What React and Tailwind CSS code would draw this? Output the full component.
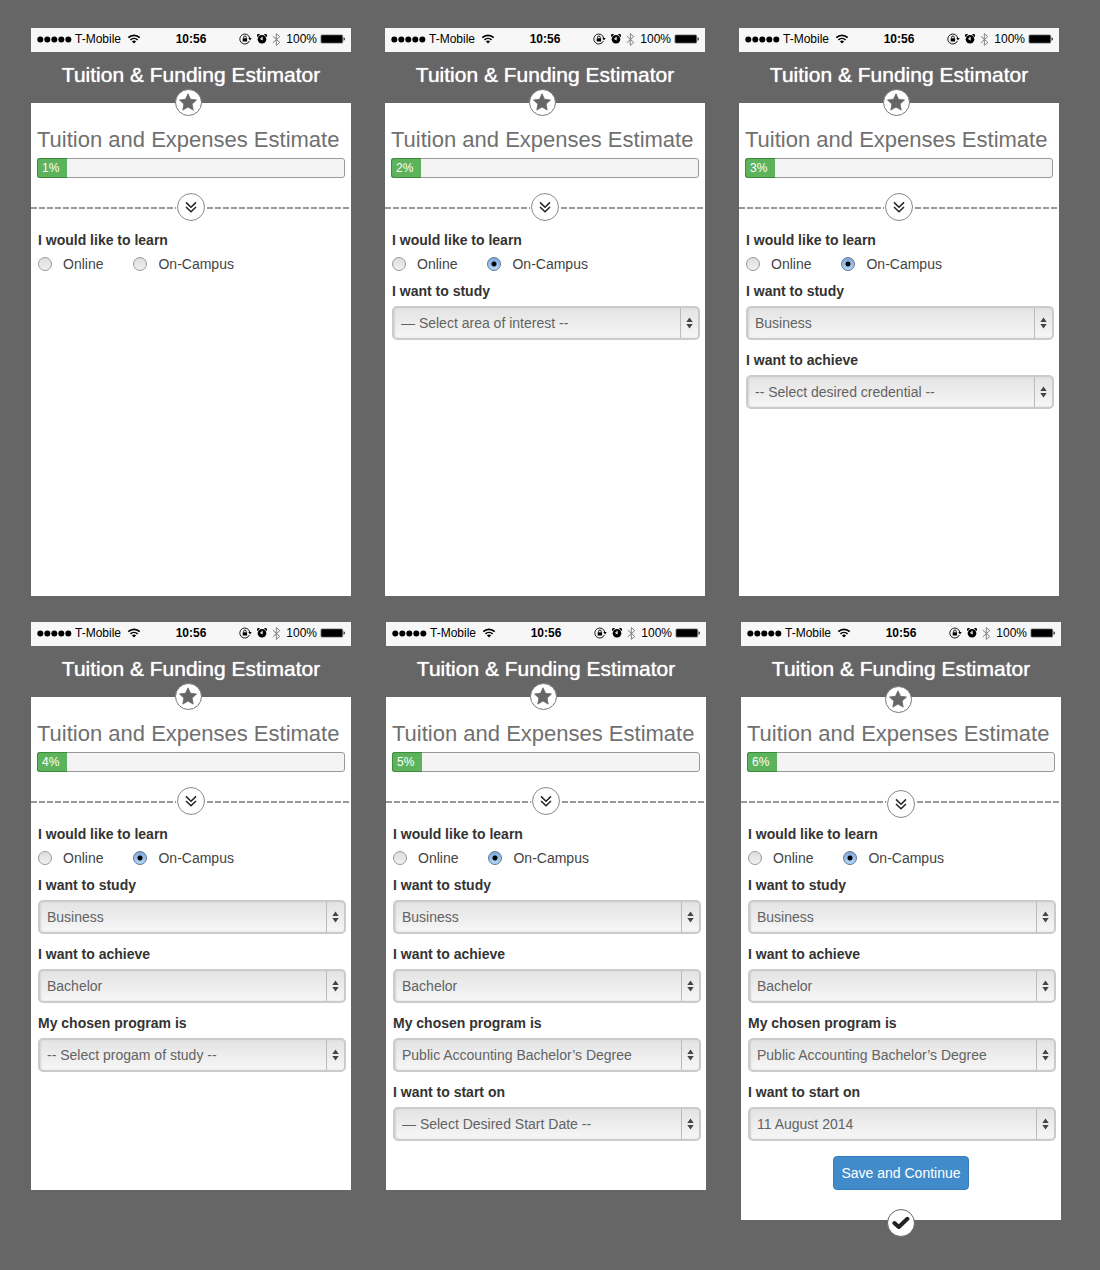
import React, { useId } from "react";

const topScreens = [
  { percent: 1, fields: [] },
  { percent: 2, campus: true, fields: [["I want to study", "— Select area of interest --"]] },
  {
    percent: 3,
    campus: true,
    fields: [
      ["I want to study", "Business"],
      ["I want to achieve", "-- Select desired credential --"],
    ],
  },
];

const bottomScreens = [
  {
    percent: 4,
    campus: true,
    fields: [
      ["I want to study", "Business"],
      ["I want to achieve", "Bachelor"],
      ["My chosen program is", "-- Select progam of study --"],
    ],
  },
  {
    percent: 5,
    campus: true,
    fields: [
      ["I want to study", "Business"],
      ["I want to achieve", "Bachelor"],
      ["My chosen program is", "Public Accounting Bachelor’s Degree"],
      ["I want to start on", "— Select Desired Start Date --"],
    ],
  },
  {
    percent: 6,
    campus: true,
    complete: true,
    fields: [
      ["I want to study", "Business"],
      ["I want to achieve", "Bachelor"],
      ["My chosen program is", "Public Accounting Bachelor’s Degree"],
      ["I want to start on", "11 August 2014"],
    ],
  },
];

function StatusBar() {
  return (
    <div className="grid h-6 grid-cols-[1fr_auto_1fr] items-center bg-[#f7f7f7] px-1.5 pb-0.5 text-[12px] leading-[22px] text-black">
      <div className="flex items-center">
        <svg width="35" height="7" viewBox="0 0 35 7" aria-hidden="true">
          {[3, 10, 17, 24, 31].map((x) => (
            <circle key={x} cx={x + 0.3} cy="3.5" r="3" />
          ))}
        </svg>
        <span className="ml-[3px]">T-Mobile</span>
        <svg className="ml-1.5" width="14" height="10" viewBox="0 0 13 10" fill="none" stroke="#000" aria-hidden="true">
          <path d="M.8 3.6a8.2 8.2 0 0 1 11.4 0" strokeWidth="1.7" />
          <path d="M2.9 5.9a5.2 5.2 0 0 1 7.2 0" strokeWidth="1.5" />
          <path d="M6.5 9.6 4.4 7.5a3 3 0 0 1 4.2 0Z" fill="#000" stroke="none" />
        </svg>
      </div>
      <span className="font-bold">10:56</span>
      <div className="flex items-center justify-end">
        <svg width="13" height="12" viewBox="0 0 13 12" fill="none" stroke="#000" aria-hidden="true">
          <path d="M10.4 8A5 5 0 1 1 10.7 5" strokeWidth=".9" />
          <path d="M9.3 5h3.4L11 7.4Z" fill="#000" stroke="none" />
          <rect x="3.7" y="5.3" width="4.4" height="3.2" fill="#000" stroke="none" />
          <path d="M4.6 5.4V4.3a1.3 1.3 0 0 1 2.6 0v1.1" strokeWidth=".9" />
        </svg>
        <svg className="ml-[5px]" width="10" height="10" viewBox="0 0 10 10" aria-hidden="true">
          <circle cx="5" cy="5.2" r="4.3" />
          <path d="M.2 3A1.7 1.7 0 0 1 3 .6ZM9.8 3A1.7 1.7 0 0 0 7 .6Z" />
          <path d="M5.1 2.8v2.7L3.4 4.5" fill="none" stroke="#fff" strokeWidth="1.1" />
        </svg>
        <svg className="ml-[5px]" width="9" height="13" viewBox="0 0 9 13" fill="none" stroke="#808080" strokeWidth="1" aria-hidden="true">
          <path d="m.8 3.2 7 6.2-3.5 3V.6l3.5 3-7 6.2" />
        </svg>
        <span className="ml-[5px]">100%</span>
        <svg className="ml-[3px]" width="25" height="10" viewBox="0 0 25 10" aria-hidden="true">
          <rect x=".5" y=".5" width="22.6" height="9" rx="1.5" fill="#888" />
          <rect x="1.3" y="1.2" width="21" height="7.6" rx=".8" />
          <path d="M23.6 3.2c1.6.6 1.6 3 0 3.6Z" />
        </svg>
      </div>
    </div>
  );
}

function Star() {
  return (
    <svg width="19" height="19" viewBox="0 0 19 19" fill="#666" stroke="#666" strokeWidth=".8" strokeLinejoin="round" aria-hidden="true">
      <path d="m9 .8 2.5 5.5 6 .7-4.4 4.1 1.1 6L9 14.1l-5.2 3 1.1-6L.5 7l6-.7Z" />
    </svg>
  );
}

function SelectField({ label, value }) {
  const id = useId();
  return (
    <div className="mt-2.5 first:mt-[7px]">
      <label htmlFor={id} className="block text-[14px] leading-5 font-bold text-[#333]">
        {label}
      </label>
      <div className="relative mt-[5px]">
        <select
          id={id}
          defaultValue={value}
          className="block h-[34px] w-full appearance-none rounded-[5px] border-2 border-[#cbcbcb] bg-linear-to-b from-[#e2e2e2] to-[#f8f8f8] bg-origin-border pr-6 pl-[7px] text-[14px] text-[#636363] shadow-[inset_1px_0_2px_#d4d4d4]"
        >
          <option>{value}</option>
        </select>
        <span className="pointer-events-none absolute inset-y-0.5 right-0.5 flex w-[18px] items-center justify-center border-l border-[#bbb]">
          <svg width="7" height="12" viewBox="0 0 7 12" fill="#444" aria-hidden="true">
            <path d="M3.5.5 6.7 5H.3ZM3.5 11.5.3 7h6.4Z" />
          </svg>
        </span>
      </div>
    </div>
  );
}

function Radio({ name, checked, children }) {
  return (
    <label className="flex items-center gap-[11px] text-[14px] leading-5 text-[#444]">
      <input
        type="radio"
        name={name}
        defaultChecked={checked}
        className="size-3.5 appearance-none rounded-full border border-[#999] bg-linear-to-b from-[#dcdcdc] to-[#f2f2f2] bg-origin-border checked:border-[#66758f] checked:bg-[radial-gradient(circle,#000_0_2px,transparent_3px),linear-gradient(#78a4da,#b4dcfb)]"
      />
      {children}
    </label>
  );
}

function Phone({ percent, campus, complete, fields }) {
  const group = useId();
  return (
    <section className="min-h-[568px] bg-white">
      <StatusBar />
      <header className="relative bg-[#666] pt-2 pb-[13px] text-center text-white">
        <h1 className="text-[21px] leading-[30px] font-normal whitespace-nowrap [text-shadow:0_0_1px_#fff]">
          Tuition &amp; Funding Estimator
        </h1>
        <span
          className={`absolute left-[45%] flex size-[27px] items-center justify-center rounded-full border border-[#777] bg-white ${complete ? "-bottom-4" : "-bottom-[13px]"}`}
        >
          <Star />
        </span>
      </header>

      <div className="px-1.5 pt-[22px]">
        <h2 className="text-[22px] leading-[30px] whitespace-nowrap text-[#707070]">Tuition and Expenses Estimate</h2>
        <div
          role="progressbar"
          aria-label="Estimate progress"
          aria-valuenow={percent}
          className="mt-[3px] flex h-5 rounded-[3px] border border-[#999] bg-[#f4f4f4]"
        >
          <span className="-m-px w-[30px] rounded-l-[3px] border border-r-0 border-[#3d8b3d] bg-[#5cb35c] pl-1 text-[12px] leading-[18px] text-white">
            {percent}%
          </span>
        </div>
      </div>

      <div className="relative mt-[29px] h-0.5 bg-[repeating-linear-gradient(90deg,#999_0_6px,transparent_6px_8px)]">
        <span
          className={`absolute left-1/2 flex size-7 -translate-x-1/2 items-center justify-center rounded-full border border-[#888] bg-white ring-1 ring-white ${complete ? "-top-[11px]" : "-top-3.5"}`}
        >
          <svg width="12" height="12" viewBox="0 0 12 12" fill="none" stroke="#222" strokeWidth="1.5" aria-hidden="true">
            <path d="m1 1.4 5 4.8 5-4.8M1 6l5 4.8L11 6" />
          </svg>
        </span>
      </div>

      <form className="px-[7px] pt-[21px]" onSubmit={(e) => e.preventDefault()}>
        <fieldset>
          <legend className="text-[14px] leading-5 font-bold text-[#333]">I would like to learn</legend>
          <div className="mt-1 flex gap-[30px]">
            <Radio name={group}>Online</Radio>
            <Radio name={group} checked={campus}>
              On-Campus
            </Radio>
          </div>
        </fieldset>
        <div className="-mr-0.5 pb-[15px]">
          {fields.map(([label, value]) => (
            <SelectField key={label} label={label} value={value} />
          ))}
        </div>
        {complete && (
          <div className="flex justify-center pb-[30px]">
            <button
              type="submit"
              className="h-[34px] rounded-[4px] border border-[#357ebd] bg-[#428bca] px-[7px] text-[14px] leading-5 text-white"
            >
              Save and Continue
            </button>
          </div>
        )}
      </form>

      {complete && (
        <div className="relative">
          <span className="absolute -top-[11px] left-1/2 flex size-7 -translate-x-1/2 items-center justify-center rounded-full border border-[#666] bg-white">
            <svg width="18" height="14" viewBox="0 0 18 14" fill="none" stroke="#222" strokeWidth="4" aria-hidden="true">
              <path d="m2.4 7 4.4 4L15.4 2.8" strokeLinecap="round" strokeLinejoin="round" />
            </svg>
          </span>
        </div>
      )}
    </section>
  );
}

export default function App() {
  return (
    <main className="min-h-screen bg-[#666] pt-7 pb-[50px] pl-[31px] font-['Liberation_Sans',Arial,sans-serif]">
      <div className="grid grid-cols-3 items-start gap-x-[34px] pr-[41px]">
        {topScreens.map((s) => (
          <Phone key={s.percent} {...s} />
        ))}
      </div>
      <div className="mt-[26px] grid grid-cols-3 items-start gap-x-[35px] pr-[39px]">
        {bottomScreens.map((s) => (
          <Phone key={s.percent} {...s} />
        ))}
      </div>
    </main>
  );
}
